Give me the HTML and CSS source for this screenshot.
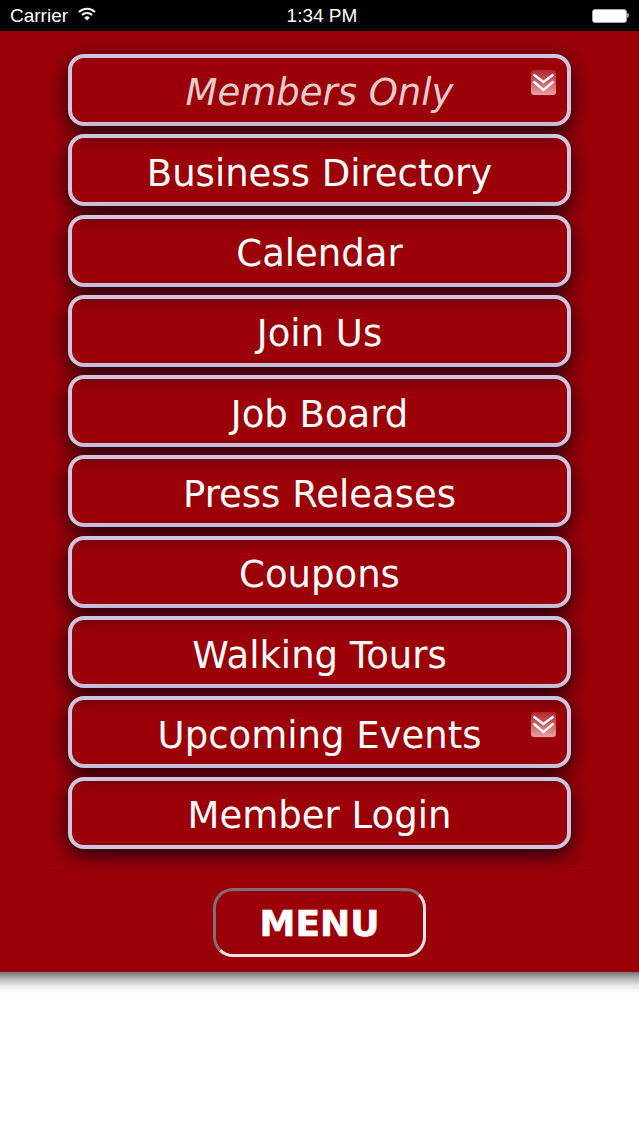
FILE: index.html
```html
<!DOCTYPE html>
<html lang="en">
<head>
    <meta charset="UTF-8">
    <meta name="viewport" content="width=device-width, initial-scale=1.0">
    <title>Menu</title>
    <link rel="stylesheet" href="styles.css">
</head>
<body>
    <div class="status-bar">
        <div class="status-left">
            <span>Carrier</span>
            <svg class="wifi" width="18" height="14" viewBox="0 0 18 14">
                <path d="M1 5a11.500 11.500 0 0 1 16 0" fill="none" stroke="#fff" stroke-width="2"/>
                <path d="M3.900 8a7.400 7.400 0 0 1 10.200 0" fill="none" stroke="#fff" stroke-width="2"/>
                <path d="M9 13.600 6.200 10.700a4 4 0 0 1 5.600 0z" fill="#fff"/>
            </svg>
        </div>
        <div class="status-time">1:34 PM</div>
        <div class="status-right">
            <div class="battery"></div>
            <div class="battery-tip"></div>
        </div>
    </div>
    <div class="menu-panel">
        <div class="menu-list">
            <a class="menu-item members">Members Only
                <svg class="chevrons" viewBox="0 0 25 25"><use href="#chevrons"/></svg>
            </a>
            <a class="menu-item">Business Directory</a>
            <a class="menu-item">Calendar</a>
            <a class="menu-item">Join Us</a>
            <a class="menu-item">Job Board</a>
            <a class="menu-item">Press Releases</a>
            <a class="menu-item">Coupons</a>
            <a class="menu-item">Walking Tours</a>
            <a class="menu-item">Upcoming Events
                <svg class="chevrons" viewBox="0 0 25 25"><use href="#chevrons"/></svg>
            </a>
            <a class="menu-item">Member Login</a>
        </div>
        <div class="menu-footer">
            <button class="menu-button">MENU</button>
        </div>
    </div>
    <div class="panel-shadow"></div>
    <svg width="0" height="0" class="defs">
        <defs>
            <linearGradient id="tile" x1="0" y1="0" x2="0" y2="1">
                <stop offset="0" stop-color="#b0262e"/>
                <stop offset="1" stop-color="#e8a0a2"/>
            </linearGradient>
            <g id="chevrons">
                <rect width="25" height="25" rx="3" fill="url(#tile)"/>
                <path d="M2.500 4.500 12.500 12 22.500 4.500M2.500 11.500 12.500 20 22.500 11.500" fill="none" stroke="#fff" stroke-width="2.400"/>
            </g>
        </defs>
    </svg>
</body>
</html>
```

FILE: styles.css
```css
body {
    margin: 0;
    background-color: #fff;
    font-family: "DejaVu Sans", sans-serif;
}
.status-bar {
    height: 31px;
    background-color: #000;
    color: #fff;
    font-family: "Liberation Sans", sans-serif;
    font-size: 19px;
    display: grid;
    grid-template-columns: 1fr auto 1fr;
    align-items: center;
    padding: 0 10px;
}
.status-left {
    display: flex;
    align-items: center;
    gap: 10px;
}
.status-time {
    padding-left: 5px;
}
.status-right {
    display: flex;
    justify-content: flex-end;
    align-items: center;
}
.wifi {
    margin-top: -3px;
}
.battery {
    width: 35px;
    height: 14px;
    background-color: #fff;
    border: 1px solid #aaa;
    box-sizing: border-box;
    border-radius: 3px;
}
.battery-tip {
    width: 2px;
    height: 5px;
    background-color: #999;
    border-radius: 0 2px 2px 0;
}
.menu-panel {
    background-color: #9b0008;
}
.panel-shadow {
    height: 22px;
    background: linear-gradient(#757575, #b5b5b5 30%, #ececec 65%, #fff);
}
.menu-list {
    height: 839px;
    box-sizing: border-box;
    padding: 23px 68px 0;
    display: flex;
    flex-direction: column;
    gap: 8.3px;
    overflow: hidden;
}
.menu-item {
    position: relative;
    height: 72px;
    flex-shrink: 0;
    box-sizing: border-box;
    padding-top: 6px;
    border: 4px solid #cdc6e2;
    border-radius: 16px;
    box-shadow: 0 6px 20px rgba(20,0,15,0.95);
    color: #fff;
    font-size: 37px;
    display: flex;
    align-items: center;
    justify-content: center;
    cursor: pointer;
}
.members {
    padding-top: 5px;
    font-style: italic;
    color: #e6cccc;
}
.chevrons {
    position: absolute;
    top: 12px;
    right: 11px;
    width: 25px;
    height: 25px;
}
.menu-footer {
    height: 102px;
    box-sizing: border-box;
    padding-top: 17px;
    display: flex;
    justify-content: center;
    border-top: 1px solid #86000a;
}
.menu-button {
    width: 213px;
    height: 69px;
    box-sizing: border-box;
    padding-top: 2px;
    background: none;
    border: 3px solid;
    border-color: #7d7075 #f6e4e4 #f6e4e4 #7d7075;
    border-radius: 20px;
    color: #fff;
    font-family: "DejaVu Sans", sans-serif;
    font-weight: bold;
    font-size: 36px;
    -webkit-text-stroke: 0.6px #fff;
    cursor: pointer;
}
.defs {
    position: absolute;
}
```
